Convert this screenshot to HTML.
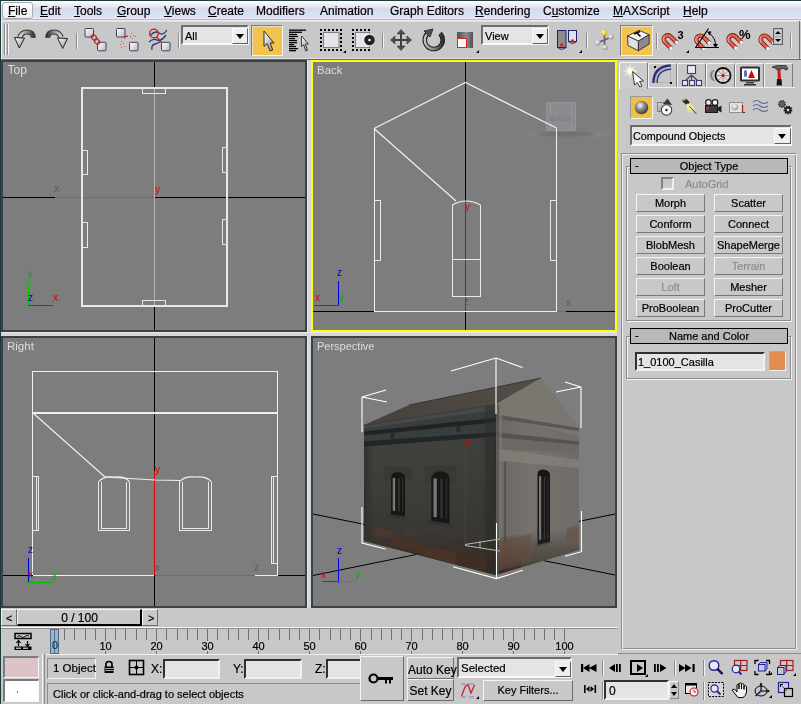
<!DOCTYPE html>
<html><head><meta charset="utf-8">
<style>
*{margin:0;padding:0;box-sizing:border-box}
html,body{width:801px;height:704px;overflow:hidden;will-change:transform;-webkit-text-stroke:0.2px currentColor;background:#c8c8c8;font-family:"Liberation Sans",sans-serif;font-size:11px;color:#000}
.a{position:absolute}
svg{position:absolute;overflow:hidden;-webkit-text-stroke:0}
#frame{left:0;top:0;width:801px;height:704px;border-left:1px solid #1e3c40;border-top:1px solid #1e3c40}
#menu{left:1px;top:1px;width:800px;height:19px;background:linear-gradient(#f6fefe 0px,#fcf8fa 1.5px,#f2f3f6 2.5px,#eaeef2 4px,#e6e9f2 6px,#d8ddee 7px,#d5dbee 8px,#dde1f3 16px,#e4e8f6 17.5px);border-bottom:1px solid #babcc8}
#menu span{position:absolute;top:3px;font-size:12px;color:#000;white-space:nowrap}
#menu u{text-decoration:underline;text-underline-offset:1px}
#filebox{left:1px;top:1px;width:31px;height:17px;border:1px solid #a8aab4;border-radius:3px;background:linear-gradient(#fdfdfd,#eceef4)}
#tb{left:1px;top:20px;width:800px;height:40px;background:linear-gradient(#ececec 0,#ececec 1px,#dedede 1px,#dedede 2px,#c8c8c8 2px)}
.vp{position:absolute;background:#7d7d7d;border:2px solid #38404a}
.vp.act{border-color:#ffff00}
.sep{position:absolute;width:2px;border-left:1px solid #8a8a8a;border-right:1px solid #f4f4f4}

.tab{border-left:1px solid #f4f4f4;border-top:1px solid #f4f4f4;border-right:1px solid #7c7c7c;border-top-left-radius:2px;border-top-right-radius:2px}
.tab.sel{background:#cccccc}
.dd{background:#e4e4e4;border:2px solid;border-color:#6c6c6c #f8f8f8 #f8f8f8 #6c6c6c}
.dd span,.inp span{position:absolute;white-space:nowrap}
.ddb{position:absolute;background:#eeeeee;border:1px solid;border-color:#fafafa #606060 #606060 #fafafa}
.ddb:after{content:"";position:absolute;left:3px;top:5px;border-left:4px solid transparent;border-right:4px solid transparent;border-top:5px solid #000}
.etch{border:1px solid #8c8c8c;box-shadow:inset 1px 1px 0 #f4f4f4,1px 1px 0 #f4f4f4}
.rtitle{background:#b9b9b9;border:1px solid #000}
.rtitle .dash{position:absolute;left:4px;top:0px;font-size:11px}
.rtitle .rt{position:absolute;left:0;right:0;top:1px;text-align:center;font-size:11px}
.chk{border:2px solid;border-color:#848484 #f0f0f0 #f0f0f0 #848484;background:#c8c8c8}
.dis{color:#8c8c8c;white-space:nowrap}
.btn{width:69px;height:18px;background:#c8c8c8;border:1px solid;border-color:#f4f4f4 #787878 #787878 #f4f4f4;text-align:center;font-size:11px;line-height:17px;white-space:nowrap}
.inp{background:#e4e4e4;border:2px solid;border-color:#303030 #f0f0f0 #f0f0f0 #303030}

.rb{border:1px solid;border-color:#f4f4f4 #6c6c6c #6c6c6c #f4f4f4;background:#c8c8c8}
.arr{position:absolute;font-size:11px}
.tl{font-size:11px;text-align:center;background:#c8c8c8;overflow:visible;white-space:nowrap}
.sk{border:1px solid;border-color:#8c8c8c #f4f4f4 #f4f4f4 #8c8c8c}
.sk span{position:absolute;white-space:nowrap;font-size:12px}
.lab{font-size:12px}
.bt{text-align:center;font-size:12px;line-height:19px;white-space:nowrap}

.obtn{background:#f2c44e;border:1px solid;border-color:#7c7c7c #f4f4f4 #f4f4f4 #7c7c7c;box-shadow:inset 1px 1px 0 #e8e0c8}
</style></head><body>
<div id="frame" class="a"></div>
<div id="menu" class="a">
  <div id="filebox" class="a"></div>
  <span style="left:7px"><u>F</u>ile</span>
  <span style="left:39px"><u>E</u>dit</span>
  <span style="left:73px"><u>T</u>ools</span>
  <span style="left:116px"><u>G</u>roup</span>
  <span style="left:163px"><u>V</u>iews</span>
  <span style="left:207px"><u>C</u>reate</span>
  <span style="left:255px">Modifiers</span>
  <span style="left:319px">Animation</span>
  <span style="left:389px">Graph Editors</span>
  <span style="left:474px"><u>R</u>endering</span>
  <span style="left:542px">C<u>u</u>stomize</span>
  <span style="left:612px"><u>M</u>AXScript</span>
  <span style="left:682px"><u>H</u>elp</span>
</div>
<div id="tb" class="a"></div>

<!-- TOOLBAR ICONS -->
<div class="a" style="left:1px;top:58px;width:800px;height:1px;background:#dcdcdc"></div>
<div class="a" style="left:1px;top:59px;width:800px;height:1px;background:#6c6c6c"></div>
<div class="a" style="left:1px;top:20px;width:1px;height:39px;background:#eef2f6"></div>
<div class="a" style="left:4px;top:24px;width:1px;height:31px;background:#8c8c8c"></div>
<div class="a" style="left:5px;top:24px;width:1px;height:31px;background:#f4f4f4"></div>
<div class="a" style="left:7px;top:24px;width:1px;height:31px;background:#8c8c8c"></div>
<div class="a" style="left:8px;top:24px;width:1px;height:31px;background:#f4f4f4"></div>
<div class="a sep" style="left:76px;top:33px;height:16px"></div>
<div class="a sep" style="left:178px;top:33px;height:16px"></div>
<div class="a sep" style="left:382px;top:33px;height:16px"></div>
<div class="a sep" style="left:586px;top:33px;height:16px"></div>
<div class="a sep" style="left:656px;top:33px;height:16px"></div>
<div class="a sep" style="left:790px;top:33px;height:16px"></div>
<div class="a" style="left:799px;top:21px;width:1px;height:38px;background:#6c6c6c"></div>
<div class="a dd" style="left:181px;top:25px;width:68px;height:20px"><span style="left:2px;top:3px;font-size:11px">All</span><div class="ddb" style="left:49px;top:1px;width:16px;height:16px"></div></div>
<div class="a dd" style="left:481px;top:25px;width:68px;height:20px"><span style="left:2px;top:3px;font-size:11px">View</span><div class="ddb" style="left:49px;top:1px;width:16px;height:16px"></div></div>
<div class="a obtn" style="left:251px;top:25px;width:32px;height:31px"></div>
<div class="a obtn" style="left:620px;top:25px;width:33px;height:31px"></div>
<svg style="left:10px;top:22px" width="790" height="36" viewBox="10 22 790 36">
 <defs>
  <linearGradient id="ug" x1="0" y1="0" x2="1" y2="0"><stop offset="0" stop-color="#c0c0c0"/><stop offset=".5" stop-color="#888"/><stop offset="1" stop-color="#303030"/></linearGradient>
  <linearGradient id="rg" x1="1" y1="0" x2="0" y2="0"><stop offset="0" stop-color="#c0c0c0"/><stop offset=".5" stop-color="#888"/><stop offset="1" stop-color="#303030"/></linearGradient>
  <linearGradient id="rg2" x1="0" y1="0" x2="1" y2="0"><stop offset="0" stop-color="#d8d8d8"/><stop offset=".55" stop-color="#909090"/><stop offset="1" stop-color="#383838"/></linearGradient><linearGradient id="ug2" x1="1" y1="0" x2="0" y2="0"><stop offset="0" stop-color="#d8d8d8"/><stop offset=".55" stop-color="#909090"/><stop offset="1" stop-color="#383838"/></linearGradient>
  <linearGradient id="ah" x1="0" y1="0" x2="1" y2="1"><stop offset="0" stop-color="#ffffff"/><stop offset="1" stop-color="#909090"/></linearGradient>
  <linearGradient id="sq" x1="0" y1="0" x2="1" y2="1"><stop offset="0" stop-color="#ffffff"/><stop offset="1" stop-color="#b8b8d0"/></linearGradient>
  <linearGradient id="mg" x1="0" y1="0" x2="1" y2="1"><stop offset="0" stop-color="#f05040"/><stop offset="1" stop-color="#f0a090"/></linearGradient>
  <linearGradient id="scg" x1="0" y1="0" x2="1" y2="0"><stop offset="0" stop-color="#505050"/><stop offset=".6" stop-color="#8a8a8a"/><stop offset="1" stop-color="#505050"/></linearGradient>
  <radialGradient id="ball" cx=".35" cy=".35" r=".7"><stop offset="0" stop-color="#ffffff"/><stop offset="1" stop-color="#909090"/></radialGradient>
  <radialGradient id="yball" cx=".35" cy=".35" r=".7"><stop offset="0" stop-color="#ffffa0"/><stop offset="1" stop-color="#c0b020"/></radialGradient>
 </defs>
 <!-- undo -->
 <path d="M33.3 37.8 Q33.3 32 27 32 Q21.8 32 19.8 37.5" fill="none" stroke="#3a3a3a" stroke-width="5.2"/>
 <path d="M33.3 37.8 Q33.3 32 27 32 Q21.8 32 19.8 37.5" fill="none" stroke="url(#rg2)" stroke-width="3.2"/>
 <path d="M14.5 37.5 L24.5 38 L19.3 48 Z" fill="url(#ah)" stroke="#202020" stroke-width="1"/>
 <!-- redo -->
 <path d="M47.7 37.8 Q47.7 32 54 32 Q59.2 32 61.2 37.5" fill="none" stroke="#3a3a3a" stroke-width="5.2"/>
 <path d="M47.7 37.8 Q47.7 32 54 32 Q59.2 32 61.2 37.5" fill="none" stroke="url(#ug2)" stroke-width="3.2"/>
 <path d="M57.5 38 L67.5 38.5 L62.7 48.5 Z" fill="url(#ah)" stroke="#202020" stroke-width="1"/>
 <!-- link -->
 <rect x="85" y="28.5" width="8.5" height="8.5" rx="1" fill="url(#sq)" stroke="#404050" stroke-width="1"/>
 <rect x="97.5" y="42.3" width="8.5" height="8.5" rx="1" fill="url(#sq)" stroke="#404050" stroke-width="1"/>
 <ellipse cx="94" cy="37.5" rx="2.2" ry="3" transform="rotate(-40 94 37.5)" fill="none" stroke="#c02020" stroke-width="1.2"/>
 <ellipse cx="97" cy="41.5" rx="2.2" ry="3" transform="rotate(-40 97 41.5)" fill="none" stroke="#c02020" stroke-width="1.2"/>
 <!-- unlink -->
 <rect x="116.5" y="28.5" width="8.5" height="8.5" rx="1" fill="url(#sq)" stroke="#404050" stroke-width="1"/>
 <rect x="129.5" y="42.3" width="8.5" height="8.5" rx="1" fill="url(#sq)" stroke="#404050" stroke-width="1"/>
 <path d="M124.5 38.5 Q125 35.5 128 36.5" fill="none" stroke="#c02020" stroke-width="1.3"/>
 <g fill="#c04040" opacity=".8"><rect x="131" y="33" width="1" height="1"/><rect x="133" y="35" width="1" height="1"/><rect x="130" y="36" width="1" height="1"/><rect x="135" y="36" width="1" height="1"/><rect x="132" y="38" width="1" height="1"/>
 <rect x="121" y="41" width="1" height="1"/><rect x="123" y="43" width="1" height="1"/><rect x="120" y="44" width="1" height="1"/><rect x="124" y="46" width="1" height="1"/><rect x="121" y="47" width="1" height="1"/></g>
 <!-- bind spacewarp -->
 <path d="M150 36 Q155 30 159 33 T167 30" fill="none" stroke="#283878" stroke-width="1.3"/>
 <path d="M149 42 Q153 38 157 40 T166 35" fill="none" stroke="#283878" stroke-width="1.3"/>
 <path d="M152 50 Q151 45 155 44 T161 41" fill="none" stroke="#283878" stroke-width="1.3"/>
 <circle cx="154" cy="33.5" r="4.3" fill="none" stroke="#c02020" stroke-width="1.3"/>
 <path d="M156.5 37 L162 43" stroke="#c02020" stroke-width="1.3"/>
 <rect x="161.5" y="42.3" width="8.5" height="8.5" rx="1" fill="url(#sq)" stroke="#404050" stroke-width="1"/>
 <!-- select arrow -->
 <path d="M264 31 L264 46.3 L267.2 43.5 L270 51 L272.7 50 L270.2 43 L274 43 Z" fill="url(#ah)" stroke="#303030" stroke-width="1"/>
 <!-- select by name -->
 <g fill="#000">
  <rect x="289" y="29.5" width="17" height="1.3"/><rect x="289" y="31.6" width="13" height="1.3"/><rect x="289" y="33.8" width="8" height="1.3"/><rect x="289" y="35.8" width="9" height="1.3"/><rect x="289" y="37.9" width="6" height="1.3"/><rect x="289" y="39.9" width="8" height="1.3"/><rect x="289" y="42" width="8" height="1.3"/><rect x="289" y="44" width="5" height="1.3"/><rect x="289" y="45.9" width="7" height="1.3"/><rect x="289" y="48" width="9" height="1.3"/><rect x="289" y="50" width="7" height="1.3"/>
 </g>
 <path d="M301.5 36 L301.5 46.5 L303.7 44.5 L305.6 51 L307.4 50.3 L305.5 44 L308.4 44 Z" fill="url(#ah)" stroke="#303030" stroke-width=".9"/>
 <!-- rect select -->
 <rect x="323.5" y="32.5" width="15.5" height="15" fill="#e4e4ec" stroke="#808080"/>
 <g fill="#000">
  <rect x="320" y="29" width="2" height="2"/><rect x="324" y="29" width="2" height="2"/><rect x="328" y="29" width="2" height="2"/><rect x="332" y="29" width="2" height="2"/><rect x="336" y="29" width="2" height="2"/><rect x="340" y="29" width="2" height="2"/>
  <rect x="320" y="49" width="2" height="2"/><rect x="324" y="49" width="2" height="2"/><rect x="328" y="49" width="2" height="2"/><rect x="332" y="49" width="2" height="2"/><rect x="336" y="49" width="2" height="2"/><rect x="340" y="49" width="2" height="2"/>
  <rect x="320" y="33" width="2" height="2"/><rect x="320" y="37" width="2" height="2"/><rect x="320" y="41" width="2" height="2"/><rect x="320" y="45" width="2" height="2"/>
  <rect x="340" y="33" width="2" height="2"/><rect x="340" y="37" width="2" height="2"/><rect x="340" y="41" width="2" height="2"/><rect x="340" y="45" width="2" height="2"/>
  <path d="M343 53 H346 V50 Z"/>
 </g>
 <!-- window/crossing -->
 <rect x="355.5" y="32.5" width="14" height="15" fill="#e4e4ec" stroke="#808080"/>
 <g fill="#000">
  <rect x="352" y="29" width="2" height="2"/><rect x="356" y="29" width="2" height="2"/><rect x="360" y="29" width="2" height="2"/><rect x="364" y="29" width="2" height="2"/><rect x="368" y="29" width="2" height="2"/>
  <rect x="352" y="49" width="2" height="2"/><rect x="356" y="49" width="2" height="2"/><rect x="360" y="49" width="2" height="2"/><rect x="364" y="49" width="2" height="2"/><rect x="368" y="49" width="2" height="2"/>
  <rect x="352" y="33" width="2" height="2"/><rect x="352" y="37" width="2" height="2"/><rect x="352" y="41" width="2" height="2"/><rect x="352" y="45" width="2" height="2"/>
 </g>
 <circle cx="369" cy="40" r="6.2" fill="#f0f0f0"/>
 <circle cx="369.5" cy="40" r="5.3" fill="#202020"/>
 <circle cx="369.5" cy="40" r="1.3" fill="#fff"/>
 <!-- move -->
 <g fill="#505050" stroke="#303030" stroke-width=".6">
  <path d="M401 29.5 L405 34 H397 Z"/><path d="M401 50.5 L405 46 H397 Z"/><path d="M390.5 40 L395 36 V44 Z"/><path d="M411.5 40 L407 36 V44 Z"/>
 </g>
 <path d="M401 33 V47 M394 40 H408" stroke="#404040" stroke-width="2"/>
 <!-- rotate -->
 <path d="M440 33.5 A9 9 0 1 1 427.5 33.5" fill="none" stroke="#202020" stroke-width="4.6"/>
 <path d="M440 33.5 A9 9 0 1 1 427.5 33.5" fill="none" stroke="url(#ug)" stroke-width="2.4"/>
 <path d="M424 31 L433 29 L430 37 Z" fill="#505050" stroke="#202020" stroke-width=".8"/>
 <!-- scale -->
 <rect x="457" y="32" width="16" height="16" fill="url(#scg)"/>
 <rect x="457.5" y="38.5" width="9" height="9" fill="#fff" stroke="#e02020"/>
 <path d="M476 53 H479 V50 Z" fill="#000"/>
 <!-- pivot -->
 <rect x="557.5" y="30.5" width="8.5" height="17" rx="0" fill="#8c8c8c" stroke="#20206a"/>
 <path d="M557.5 47.5 Q561.7 51 566 47.5" fill="none" stroke="#20206a"/>
 <circle cx="561.7" cy="45" r="1.7" fill="#e02020"/>
 <rect x="568.5" y="30.5" width="8" height="11" fill="#e0e0e8" stroke="#20206a"/>
 <path d="M568.5 41.5 Q572.5 45 576.5 41.5" fill="none" stroke="#20206a"/>
 <circle cx="572.5" cy="41" r="1.7" fill="#e02020"/>
 <path d="M579 53 H582 V50 Z" fill="#000"/>
 <!-- manipulate -->
 <path d="M604.5 33 V47 M598 42.5 L604.5 40 L611 37" stroke="#606060" stroke-width="1.6"/>
 <circle cx="604.2" cy="32.8" r="3" fill="url(#yball)"/>
 <circle cx="611" cy="37" r="2.6" fill="url(#ball)"/>
 <circle cx="597.8" cy="42.8" r="2.6" fill="url(#ball)"/>
 <circle cx="605" cy="47.4" r="2.6" fill="url(#ball)"/>
 <!-- keyboard toggle -->
 <path d="M627.5 36 L639 30.3 L649.2 34.7 L638.4 41.1 Z" fill="#f4f4f4" stroke="#303030" stroke-width=".9"/>
 <path d="M627.5 36 L638.4 41.1 V50.7 L628 45.5 Z" fill="#e0e0e0" stroke="#303030" stroke-width=".9"/>
 <path d="M638.4 41.1 L649.2 34.7 V44 L638.4 50.7 Z" fill="#8a8a8a" stroke="#303030" stroke-width=".9"/>
 <path d="M634 34 L640 31.5 M637 33 L640.5 36.5" stroke="#000" stroke-width="1.6"/>
 <!-- snaps -->
 <g transform="translate(667.8 39.3) rotate(-45)">
  <path d="M-4 9 V0 A4 4 0 0 1 4 0 V9" fill="none" stroke="#6a2018" stroke-width="4.4"/>
  <path d="M-4 9 V0 A4 4 0 0 1 4 0 V9" fill="none" stroke="#f06050" stroke-width="2.6"/>
  <path d="M-4.6 0 A4.6 4.6 0 0 1 0 -4.6" fill="none" stroke="#f8a090" stroke-width="1"/>
  <path d="M-4 7.2 V9.6 M4 7.2 V9.6" stroke="#ffffff" stroke-width="3"/>
 </g>
 <text x="677.5" y="38.5" font-family="Liberation Sans" font-weight="bold" font-size="11" fill="#000">3</text>
 <path d="M686 53 H689 V50 Z" fill="#000"/>
 <g transform="translate(700.3 39.6) rotate(-45)">
  <path d="M-4 9 V0 A4 4 0 0 1 4 0 V9" fill="none" stroke="#6a2018" stroke-width="4.4"/>
  <path d="M-4 9 V0 A4 4 0 0 1 4 0 V9" fill="none" stroke="#f06050" stroke-width="2.6"/>
  <path d="M-4.6 0 A4.6 4.6 0 0 1 0 -4.6" fill="none" stroke="#f8a090" stroke-width="1"/>
  <path d="M-4 7.2 V9.6 M4 7.2 V9.6" stroke="#ffffff" stroke-width="3"/>
 </g>
 <path d="M695 47.5 H719 M696 47 L708.5 28.5" stroke="#000" stroke-width="1.2" fill="none"/>
 <path d="M709 33 Q716 38 715.5 46" fill="none" stroke="#000" stroke-width="1"/>
 <path d="M707 31.5 L711.5 31.5 L709.5 35.5 Z M713 44 L718 44 L715.5 48 Z" fill="#000"/>
 <g transform="translate(732.6 39.2) rotate(-45)">
  <path d="M-4 9 V0 A4 4 0 0 1 4 0 V9" fill="none" stroke="#6a2018" stroke-width="4.4"/>
  <path d="M-4 9 V0 A4 4 0 0 1 4 0 V9" fill="none" stroke="#f06050" stroke-width="2.6"/>
  <path d="M-4.6 0 A4.6 4.6 0 0 1 0 -4.6" fill="none" stroke="#f8a090" stroke-width="1"/>
  <path d="M-4 7.2 V9.6 M4 7.2 V9.6" stroke="#ffffff" stroke-width="3"/>
 </g>
 <text x="739" y="38.6" font-family="Liberation Sans" font-weight="bold" font-size="13" fill="#000">%</text>
 <g transform="translate(764.6 39.6) rotate(-45)">
  <path d="M-4 9 V0 A4 4 0 0 1 4 0 V9" fill="none" stroke="#6a2018" stroke-width="4.4"/>
  <path d="M-4 9 V0 A4 4 0 0 1 4 0 V9" fill="none" stroke="#f06050" stroke-width="2.6"/>
  <path d="M-4.6 0 A4.6 4.6 0 0 1 0 -4.6" fill="none" stroke="#f8a090" stroke-width="1"/>
  <path d="M-4 7.2 V9.6 M4 7.2 V9.6" stroke="#ffffff" stroke-width="3"/>
 </g>
 <rect x="773.5" y="28.5" width="9" height="16" fill="#b0b0b0" stroke="#606060"/>
 <rect x="774.5" y="29.5" width="7" height="6" fill="#d0d0d0"/>
 <rect x="774.5" y="37.5" width="7" height="6" fill="#d0d0d0"/>
 <path d="M775 34 L778 31 L781 34 Z M775 39 L778 42 L781 39 Z" fill="#000"/>
</svg>


<div class="a" style="left:307px;top:60px;width:4px;height:548px;background:#d6d6d6;border-left:1px solid #e8e8e8"></div>
<div class="a" style="left:1px;top:332px;width:616px;height:4px;background:#d6d6d6;border-top:1px solid #e8e8e8"></div>
<!-- TOP VIEWPORT -->
<div class="vp" style="left:1px;top:60px;width:306px;height:272px"></div>
<svg style="left:3px;top:62px" width="302" height="268" viewBox="3 62 302 268">
 <g shape-rendering="crispEdges" stroke-width="1" fill="none">
  <line x1="3" y1="197.5" x2="55" y2="197.5" stroke="#000"/>
  <line x1="55" y1="197.5" x2="155" y2="197.5" stroke="#6c6c6c"/>
  <line x1="155" y1="197.5" x2="305" y2="197.5" stroke="#000"/>
  <line x1="154.5" y1="62" x2="154.5" y2="89" stroke="#000"/>
  <line x1="154.5" y1="305" x2="154.5" y2="330" stroke="#000"/>
  <line x1="154.5" y1="89" x2="154.5" y2="305" stroke="#b4b4b4"/>
  <rect x="82" y="88" width="145" height="218" stroke="#e8e8e8" stroke-width="2"/>
  <path d="M142.5 89 V93.5 H165.5 V89 M142.5 305 V300.5 H165.5 V305" stroke="#e8e8e8"/>
  <path d="M83 150.5 H87.5 V174.5 H83 M83 222.5 H87.5 V247.5 H83" stroke="#e8e8e8"/>
  <path d="M227 147.5 H222.5 V172.5 H227 M227 219.5 H222.5 V244.5 H227" stroke="#e8e8e8"/>
  <line x1="28.5" y1="281" x2="28.5" y2="306" stroke="#00c000"/>
  <line x1="28" y1="305.5" x2="53" y2="305.5" stroke="#e00000"/>
 </g>
 <g font-family="Liberation Sans" font-size="10">
  <text x="54" y="192" fill="#5c5c5c">x</text>
  <text x="155" y="193" fill="#e00000">y</text>
  <text x="28" y="277" fill="#00b000">y</text>
  <text x="28" y="301" fill="#0000d0">z</text>
  <text x="53" y="301" fill="#e00000">x</text>
 </g>
 <text x="7.5" y="74" font-family="Liberation Sans" font-size="12" fill="#dcdcdc">Top</text>
</svg>

<!-- BACK VIEWPORT -->
<div class="vp act" style="left:311px;top:60px;width:306px;height:272px"></div>
<svg style="left:313px;top:62px" width="302" height="268" viewBox="313 62 302 268">
 <defs><radialGradient id="vcs"><stop offset="0" stop-color="#5a5a5a" stop-opacity=".7"/><stop offset="1" stop-color="#7d7d7d" stop-opacity="0"/></radialGradient></defs>
 <filter id="vsb"><feGaussianBlur stdDeviation="1.5"/></filter><g filter="url(#vsb)"><ellipse cx="569" cy="134" rx="44" ry="4" fill="#858585" opacity=".7"/>
 <ellipse cx="566" cy="134" rx="28" ry="3" fill="#6a6a6a" opacity=".7"/></g>
 <rect x="546.5" y="102.5" width="29" height="28" fill="#8a8c90" stroke="#929498"/>
 <path d="M550.5 103 V130 M571.5 103 V130" stroke="#95979b" stroke-width="1"/>
 <text x="561" y="121" font-family="Liberation Sans" font-size="8" font-weight="bold" fill="#7c7e82" text-anchor="middle">BACK</text>
 <g shape-rendering="crispEdges" fill="none">
  <line x1="313" y1="311.5" x2="374" y2="311.5" stroke="#000"/>
  <line x1="557" y1="311.5" x2="566" y2="311.5" stroke="#6c6c6c"/>
  <line x1="566" y1="311.5" x2="615" y2="311.5" stroke="#000"/>
  <line x1="465.5" y1="62" x2="465.5" y2="202" stroke="#000"/>
  <line x1="465.5" y1="311" x2="465.5" y2="330" stroke="#000"/>
  <line x1="465.5" y1="202" x2="465.5" y2="311" stroke="#e00000"/>
  <path d="M374.5 128 V311.5 H556.5 V128" stroke="#f0f0f0"/>
  <path d="M375 200.5 H380.5 V260.5 H375" stroke="#e8e8e8"/>
  <path d="M556 200.5 H550.5 V260.5 H556" stroke="#e8e8e8"/>
  <path d="M452.5 205 V296.5 H480.5 V205 M453 259.5 H480" stroke="#e8e8e8"/>
  <line x1="338.5" y1="281" x2="338.5" y2="306" stroke="#0000e0"/>
  <line x1="314" y1="305.5" x2="339" y2="305.5" stroke="#e00000"/>
 </g>
 <g fill="none" stroke="#f0f0f0" stroke-width="1.2">
  <path d="M374 128.5 L465.5 82.5 L556.5 128"/>
  <path d="M374 128.5 L456 201"/>
  <path d="M452.5 205 Q466 197 480.5 205"/>
 </g>
 <g font-family="Liberation Sans" font-size="10">
  <text x="465" y="210" fill="#e00000">y</text>
  <text x="464" y="305" fill="#5c5c5c">z</text>
  <text x="566" y="306" fill="#5c5c5c">x</text>
  <text x="337" y="276" fill="#0000d0">z</text>
  <text x="315" y="301" fill="#e00000">x</text>
  <text x="339" y="301" fill="#00b000">y</text>
 </g>
 <text x="317" y="74" font-family="Liberation Sans" font-size="11.5" fill="#dcdcdc">Back</text>
</svg>

<!-- RIGHT VIEWPORT -->
<div class="vp" style="left:1px;top:336px;width:306px;height:272px"></div>
<svg style="left:3px;top:338px" width="302" height="268" viewBox="3 338 302 268">
 <g shape-rendering="crispEdges" fill="none">
  <line x1="3" y1="575.5" x2="33" y2="575.5" stroke="#000"/>
  <line x1="278" y1="575.5" x2="305" y2="575.5" stroke="#000"/>
  <line x1="155" y1="575.5" x2="255" y2="575.5" stroke="#6c6c6c"/>
  <line x1="32.5" y1="575.5" x2="155" y2="575.5" stroke="#f0f0f0"/>
  <line x1="255" y1="575.5" x2="278" y2="575.5" stroke="#f0f0f0"/>
  <line x1="154.5" y1="338" x2="154.5" y2="471" stroke="#000"/>
  <line x1="154.5" y1="575" x2="154.5" y2="606" stroke="#000"/>
  <line x1="154.5" y1="471" x2="154.5" y2="575" stroke="#e00000"/>
  <path d="M32.5 575 V371.5 H277.5 V575.5" stroke="#f0f0f0"/>
  <line x1="33" y1="412.5" x2="277" y2="412.5" stroke="#f0f0f0" stroke-width="2"/>
  <path d="M33 476.5 H38.5 V530.5 H33 M36.5 477 V530" stroke="#e8e8e8"/>
  <path d="M277 476.5 H271.5 V563.5 H277 M273.5 477 V563" stroke="#e8e8e8"/>
  <path d="M98.5 482 V530.5 H129.5 V482 M101.5 482 V529 M126.5 482 V529 M101 528.5 H127" stroke="#e8e8e8"/>
  <path d="M179.5 482 V530.5 H211.5 V482 M182.5 482 V529 M208.5 482 V529 M182 528.5 H209" stroke="#e8e8e8"/>
  <line x1="28.5" y1="558" x2="28.5" y2="583" stroke="#0000e0"/>
  <line x1="28" y1="582.5" x2="53" y2="582.5" stroke="#00c000"/>
 </g>
 <g fill="none" stroke="#f0f0f0" stroke-width="1.2">
  <path d="M33 413 L105 477"/>
  <path d="M105 477 L155 480 L180 480.5"/>
  <path d="M98.5 482 Q103 476 114 477 Q126 476 129.5 482"/>
  <path d="M179.5 482 Q184 476 195 477 Q207 476 211.5 482"/>
 </g>
 <g font-family="Liberation Sans" font-size="10">
  <text x="155" y="473" fill="#e00000">y</text>
  <text x="155" y="571" fill="#5c5c5c">x</text>
  <text x="254" y="571" fill="#5c5c5c">z</text>
  <text x="28" y="553" fill="#0000d0">z</text>
  <text x="28" y="578" fill="#e00000">x</text>
  <text x="52" y="578" fill="#00b000">y</text>
 </g>
 <text x="7" y="350" font-family="Liberation Sans" font-size="11.5" fill="#dcdcdc">Right</text>
</svg>

<!-- PERSPECTIVE VIEWPORT -->
<div class="vp" style="left:311px;top:336px;width:306px;height:272px"></div>
<svg style="left:313px;top:338px" width="302" height="268" viewBox="313 338 302 268">
 <g stroke="#000" stroke-width="1" fill="none">
  <line x1="313" y1="514" x2="615" y2="575"/>
  <line x1="313" y1="575.5" x2="615" y2="514"/>
 </g>
 <!--HOUSE-->
<defs>
<linearGradient id="lw" x1="0" y1="0" x2="1" y2="0"><stop offset="0" stop-color="#30302d"/><stop offset=".07" stop-color="#40403c"/><stop offset=".5" stop-color="#42413d"/><stop offset=".88" stop-color="#3f3e3a"/><stop offset="1" stop-color="#33322f"/></linearGradient>
<linearGradient id="gw" x1="0" y1="0" x2="1" y2="0"><stop offset="0" stop-color="#6a6762"/><stop offset=".4" stop-color="#75716c"/><stop offset="1" stop-color="#706c67"/></linearGradient>
<linearGradient id="rf" x1="0" y1="1" x2="1" y2="0"><stop offset="0" stop-color="#44403b"/><stop offset="1" stop-color="#554f48"/></linearGradient>
<linearGradient id="brk" x1="0" y1="0" x2="0" y2="1"><stop offset="0" stop-color="#3a3530" stop-opacity="0"/><stop offset="1" stop-color="#35291f"/></linearGradient>
<filter id="hb" x="-5%" y="-5%" width="110%" height="110%"><feGaussianBlur stdDeviation=".55"/></filter>
<linearGradient id="lwv" x1="0" y1="0" x2="0" y2="1"><stop offset=".3" stop-color="#24231f" stop-opacity="0"/><stop offset="1" stop-color="#24231f" stop-opacity=".45"/></linearGradient>
</defs>
<g filter="url(#hb)">
<polygon points="364,425 496,404 496,575 364,541" fill="url(#lw)"/>
<polygon points="364,425 496,404 496,575 364,541" fill="url(#lwv)"/>
<polygon points="364.0,425.0 496.0,404.0 496.0,436.5 364.0,446.5" fill="#383c3c" />
<polygon points="364.0,431.4 496.0,417.7 496.0,422.3 364.0,435.4" fill="#202424" />
<polygon points="364.0,441.2 496.0,432.2 496.0,436.5 364.0,446.5" fill="#222626" />
<polygon points="364.0,425.0 496.0,404.0 496.0,410.0 364.0,428.5" fill="#464848" />
<polygon points="390.4,433.5 394.4,433.0 394.4,438.2 390.4,438.6" fill="#2a2d2c" />
<polygon points="456.4,425.8 460.4,425.3 460.4,431.5 456.4,431.9" fill="#2a2d2c" />
<polygon points="364.0,517.8 496.0,544.2 496.0,575.0 364.0,541.0" fill="url(#brk)" />
<polygon points="374.6,526.9 393.0,530.5 393.0,539.5 374.6,535.3" fill="#5a3a2c" opacity=".5"/>
<polygon points="390.4,535.1 423.4,542.2 423.4,553.5 390.4,545.3" fill="#503226" opacity=".6"/>
<polygon points="423.4,545.0 456.4,552.4 456.4,564.8 423.4,556.3" fill="#553426" opacity=".6"/>
<polygon points="456.4,549.3 489.4,556.5 489.4,573.3 456.4,564.8" fill="#4a3024" opacity=".55"/>
<polygon points="403.6,527.4 416.8,529.8 416.8,538.0 403.6,535.3" fill="#5a4034" opacity=".35"/>
<polygon points="384.5,466.6 411.5,466.3 411.5,481.3 384.5,480.3" fill="#363532" opacity=".6"/>
<polygon points="387.1,513.7 408.9,516.9 408.9,519.8 387.1,516.4" fill="#303030" />
<path d="M391.1 514.2 L391.1 477.7 Q391.1 472.2 398.0 471.9 Q404.9 472.3 404.9 477.9 L404.9 516.3 Z" fill="#161616"/>
<polygon points="392.7,478.0 395.2,478.1 395.2,511.0 392.7,510.6" fill="#8a8a86" opacity=".85"/>
<polygon points="398.0,478.2 399.7,478.2 399.7,511.6 398.0,511.4" fill="#3a3a3a" opacity=".85"/>
<polygon points="401.9,478.3 403.3,478.3 403.3,512.1 401.9,511.9" fill="#303030" opacity=".85"/>
<polygon points="424.7,465.5 456.1,465.2 456.1,482.1 424.7,481.0" fill="#363532" opacity=".6"/>
<polygon points="427.4,520.3 453.5,524.2 453.5,527.6 427.4,523.4" fill="#303030" />
<path d="M431.3 520.9 L431.3 479.0 Q431.3 471.7 440.4 471.3 Q449.5 471.9 449.5 479.2 L449.5 523.6 Z" fill="#161616"/>
<polygon points="433.5,478.4 436.8,478.5 436.8,517.3 433.5,516.9" fill="#8a8a86" opacity=".85"/>
<polygon points="440.4,478.6 442.6,478.7 442.6,518.1 440.4,517.8" fill="#3a3a3a" opacity=".85"/>
<polygon points="445.5,478.8 447.4,478.8 447.4,518.8 445.5,518.5" fill="#303030" opacity=".85"/>
<polygon points="485.4,405.7 496.0,404.0 496.0,575.0 485.4,572.3" fill="#2c2c2a" opacity=".5"/>
<polygon points="496,404 541,378 579,428 579,550 496,575" fill="url(#gw)"/>
<polygon points="496,404 541,378 579,428 579,436 496,414" fill="#7a7670"/>
<polygon points="496.0,414.3 579.0,428.0 579.0,431.1 496.0,418.5" fill="#5a5752" />
<polygon points="496.0,432.2 579.0,441.4 579.0,445.1 496.0,437.3" fill="#56534f" />
<polygon points="496.0,437.3 579.0,445.1 579.0,453.6 496.0,448.5" fill="#6c6863" />
<polygon points="496.0,448.5 579.0,459.7 579.0,468.3 496.0,460.4" fill="#8e8a84" opacity=".5"/>
<polygon points="496.0,412.6 501.8,414.1 501.8,564.9 496.0,566.5" fill="#86827c" opacity=".5"/>
<polygon points="504.3,461.2 506.0,461.4 506.0,545.6 504.3,545.9" fill="#4a4845" opacity=".8"/>
<polygon points="535.0,545.5 552.4,541.5 552.4,543.5 535.0,547.7" fill="#5a5753" opacity=".7"/>
<path d="M537.5 544.9 L537.5 474.6 Q537.5 469.6 543.7 469.6 Q550.0 470.5 550.0 475.4 L550.0 542.1 Z" fill="#161616"/>
<polygon points="539.0,476.1 541.2,476.2 541.2,539.7 539.0,540.2" fill="#8a8a86" opacity=".85"/>
<polygon points="543.7,476.4 545.2,476.4 545.2,538.9 543.7,539.2" fill="#3a3a3a" opacity=".85"/>
<polygon points="547.2,476.5 548.5,476.6 548.5,538.2 547.2,538.5" fill="#303030" opacity=".85"/>
<polygon points="496.0,537.4 579.0,528.0 579.0,550.0 496.0,575.0" fill="url(#brk)" />
<polygon points="496.0,540.8 530.9,534.4 530.9,561.5 496.0,571.6" fill="#6a4a3c" opacity=".55"/>
<polygon points="566.5,527.9 579.0,525.6 579.0,537.8 566.5,540.8" fill="#6a4a3c" opacity=".5"/>
<polygon points="520.9,556.6 558.2,546.9 558.2,556.2 520.9,567.5" fill="#505a48" opacity=".4"/>
<polygon points="496.0,404.0 499.3,405.0 499.3,574.0 496.0,575.0" fill="#4a4744" opacity=".6"/>
</g>
<polygon points="364,425 409,405 541,378 496,404" fill="url(#rf)"/>
<path d="M364 425.5 L496 404.5" stroke="#3c3a36" stroke-width="1"/>
<path d="M409 405 L541 378" stroke="#2e2c28" stroke-width=".8"/>

<!--/HOUSE-->
 <g fill="none" stroke="#fff" stroke-width="1.1">
  <path d="M386 390 L362 397 L387 402 M362 397 V432"/>
  <path d="M451 371 L496 358 L522.5 367.5 M496 358 V414"/>
  <path d="M565 382 L581 387 L556 392 M581 387 V428"/>
  <path d="M362 507 V543 L385.5 549"/>
  <path d="M453 566.8 L496.5 578.6 L522.8 570.3 M496.5 578.6 V523"/>
  <path d="M581.5 511 V551.7 L565 556.3"/>
 </g>
 <g shape-rendering="crispEdges" fill="none">
  <line x1="465.5" y1="443" x2="465.5" y2="545" stroke="#e00000"/>
  <path d="M465 544.5 L500 539 M465 545.5 L500 551 M480 541.5 L480 548" stroke="#b8b8b8" stroke-width="1" shape-rendering="auto"/>
  <line x1="338.5" y1="558" x2="338.5" y2="583" stroke="#0000e0"/>
  <line x1="322" y1="581.5" x2="339" y2="581.5" stroke="#e00000"/>
  <line x1="338" y1="581.5" x2="356" y2="581.5" stroke="#00c000"/>
 </g>
 <g font-family="Liberation Sans" font-size="10">
  <text x="465" y="445" fill="#e00000">y</text>
  <text x="337" y="554" fill="#0000d0">z</text>
  <text x="321" y="578" fill="#e00000">x</text>
  <text x="355" y="578" fill="#00b000">y</text>
 </g>
 <text x="317" y="350" font-family="Liberation Sans" font-size="11" fill="#dcdcdc">Perspective</text>
</svg>


<!-- COMMAND PANEL -->
<div class="a" style="left:617px;top:60px;width:184px;height:594px;background:#c8c8c8"></div>
<div class="a" style="left:619px;top:87px;width:176px;height:1px;background:#f0f0f0"></div>
<div class="a" style="left:621px;top:153px;width:176px;height:497px;border-left:1px solid #8c8c8c;border-top:1px solid #8c8c8c;border-right:1px solid #f0f0f0;border-bottom:1px solid #f0f0f0;box-shadow:inset 1px 1px 0 #f0f0f0,inset -1px -1px 0 #8c8c8c"></div>
<!-- tabs -->
<div class="a tab sel" style="left:619px;top:62px;width:29px;height:27px"></div>
<div class="a tab" style="left:648px;top:63px;width:29px;height:24px"></div>
<div class="a tab" style="left:677px;top:63px;width:29px;height:24px"></div>
<div class="a tab" style="left:706px;top:63px;width:29px;height:24px"></div>
<div class="a tab" style="left:735px;top:63px;width:29px;height:24px"></div>
<div class="a tab" style="left:764px;top:63px;width:29px;height:24px"></div>
<svg style="left:619px;top:62px" width="176" height="26" viewBox="619 62 176 26">
 <defs>
  <radialGradient id="star"><stop offset="0" stop-color="#ffffff"/><stop offset=".35" stop-color="#fff8c0"/><stop offset="1" stop-color="#c8c8c8" stop-opacity="0"/></radialGradient>
  <linearGradient id="arcg" x1="0" y1="0" x2="1" y2="1"><stop offset="0" stop-color="#c0c8e8"/><stop offset="1" stop-color="#303868"/></linearGradient>
 </defs>
 <!-- create -->
 <circle cx="630" cy="71" r="6.5" fill="url(#star)"/>
 <path d="M623 71 H637 M630 64.5 V77.5 M625.5 66.5 L634.5 75.5 M634.5 66.5 L625.5 75.5" stroke="#fffce8" stroke-width=".9" opacity=".9"/>
 <circle cx="630" cy="71" r="2.2" fill="#ffffff"/>
 <path d="M632.5 71.5 L643.5 81 L639.5 81.5 L642 86 L639.8 87 L637.3 82.5 L634.5 85 Z" fill="#fafafa" stroke="#383838" stroke-width="1"/>
 <!-- modify -->
 <rect x="654.5" y="66.5" width="16" height="16" fill="none" stroke="#a8a8a8" stroke-width=".6"/>
 <path d="M655 83 Q655 68 671 67" stroke="#2a3060" stroke-width="5.5" fill="none"/>
 <path d="M655.5 83 Q655.5 68.5 671 67.5" stroke="#a8b0e0" stroke-width="2" fill="none"/>
 <rect x="654" y="66" width="2" height="2" fill="#000"/><rect x="670" y="82" width="2" height="2" fill="#000"/>
 <!-- hierarchy -->
 <g fill="#e8e8f4" stroke="#3c3c70" stroke-width="1.1">
  <path d="M691.5 75 L685 81 M691.5 75 V81 M691.5 75 L698 81" fill="none"/>
  <rect x="687.5" y="65.5" width="8" height="8"/>
  <rect x="682.5" y="80.5" width="5" height="5"/>
  <rect x="689.5" y="80.5" width="5" height="5"/>
  <rect x="696.5" y="80.5" width="5" height="5"/>
 </g>
 <!-- motion -->
 <path d="M714 70 Q709 75 714 81" stroke="#404040" fill="none" stroke-width=".8"/>
 <path d="M712 71 Q708 75 712 80" stroke="#808080" fill="none" stroke-width=".8"/>
 <circle cx="723" cy="75.5" r="7.5" fill="#e0e0e0" stroke="#101010" stroke-width="1.8"/>
 <g stroke="#808080" stroke-width=".8"><path d="M723 69 V82 M716.5 75.5 H729.5 M718.5 71 L727.5 80 M727.5 71 L718.5 80"/></g>
 <circle cx="723" cy="75.5" r="1.6" fill="#e00000"/>
 <!-- display -->
 <rect x="740" y="66.5" width="20" height="15" rx="1.5" fill="#303030"/>
 <rect x="742" y="68.5" width="16" height="11" fill="#ffffff"/>
 <rect x="744" y="70" width="3" height="7" rx="1.5" fill="#6070d0"/>
 <path d="M748 78 L751.5 70 L755 78 Z" fill="#e00000"/>
 <rect x="746" y="82" width="8" height="1.5" fill="#404040"/><rect x="744" y="84" width="12" height="1.5" fill="#303030"/>
 <!-- utilities -->
 <path d="M772 67 L777 65.5 L786 65.5 L788 69 L786 70 L783 68.5 L781 68.5 L780.5 70 L777 70 L776 68.5 Z" fill="#606060" stroke="#202020" stroke-width=".7"/>
 <path d="M777.5 70 L780.5 70 L781 79 L782 85 L777 85 L777.7 79 Z" fill="#c02020"/>
 <path d="M777 79 L781.5 79 L782 85.5 L776.5 85.5 Z" fill="#181818"/>
</svg>
<!-- create sub icons -->
<div class="a" style="left:630px;top:96px;width:23px;height:23px;background:#f0c048;border:1px solid #989898;border-right-color:#f4f4f4;border-bottom-color:#f4f4f4"></div>
<svg style="left:628px;top:94px" width="170" height="27" viewBox="628 94 170 27">
 <defs>
  <radialGradient id="sph" cx=".4" cy=".35" r=".7"><stop offset="0" stop-color="#f8f8f8"/><stop offset=".45" stop-color="#8c8c8c"/><stop offset="1" stop-color="#303030"/></radialGradient>
  <radialGradient id="lgt"><stop offset="0" stop-color="#ffffb0"/><stop offset="1" stop-color="#c8c8c8" stop-opacity="0"/></radialGradient>
 </defs>
 <circle cx="641.5" cy="107.5" r="6.8" fill="url(#sph)"/>
 <!-- shapes -->
 <defs><linearGradient id="shg" x1="0" y1="0" x2="1" y2="1"><stop offset="0" stop-color="#d8d8d8"/><stop offset="1" stop-color="#8c8c8c"/></linearGradient>
 <radialGradient id="beam" cx=".5" cy=".5" r=".5"><stop offset="0" stop-color="#ffffa0"/><stop offset=".6" stop-color="#f0f080" stop-opacity=".6"/><stop offset="1" stop-color="#c8c8c8" stop-opacity="0"/></radialGradient></defs>
 <rect x="657.5" y="102.5" width="9" height="9" fill="url(#shg)" stroke="#808080"/>
 <path d="M663 104 L667.5 98.5 L672 105 Z" fill="#383838"/>
 <circle cx="666.5" cy="110" r="5.2" fill="#fafafa" stroke="#404040" stroke-width="1.1"/>
 <circle cx="666.5" cy="110" r="1.3" fill="#303030"/>
 <!-- lights -->
 <ellipse cx="690" cy="108" rx="5" ry="6" transform="rotate(-40 690 108)" fill="url(#beam)"/>
 <path d="M681.5 100.5 L686 98.5 L689.5 102 L687.5 106 Z" fill="#282828"/>
 <path d="M682.5 100.5 L686 99.5" stroke="#e0e0e0" stroke-width=".8"/>
 <path d="M687 104 L691 109" stroke="#fff8a0" stroke-width="2.4"/>
 <path d="M689 106 L696.5 114" stroke="#303030" stroke-width=".9"/>
 <!-- cameras -->
 <circle cx="708.5" cy="102.5" r="2.8" fill="#f4f4f4" stroke="#202020" stroke-width="1.2"/>
 <circle cx="715" cy="102.5" r="2.8" fill="#f4f4f4" stroke="#202020" stroke-width="1.2"/>
 <rect x="705.5" y="105.5" width="12" height="7" fill="#3c3c3c" stroke="#181818"/>
 <path d="M718 107.5 L721.5 105.5 V112.5 L718 110.5 Z" fill="#202020"/>
 <rect x="706.5" y="107" width="2.5" height="2.5" fill="#e02020"/>
 <!-- helpers -->
 <rect x="729.5" y="102.5" width="13" height="10" fill="#e4e4e4" stroke="#909090"/>
 <circle cx="735" cy="107" r="3.3" fill="url(#sph2)"/>
 <defs><radialGradient id="sph2" cx=".4" cy=".35" r=".7"><stop offset="0" stop-color="#ffffff"/><stop offset="1" stop-color="#909090"/></radialGradient></defs>
 <path d="M742.5 105 V112.5" stroke="#c02020" stroke-width="1.4"/><path d="M743 112.5 H745" stroke="#303030" stroke-width="1"/>
 <!-- spacewarps -->
 <g stroke="#5c6aa0" stroke-width="1.1" fill="none">
  <path d="M753 102 Q756.5 99 760 102 T768 102"/>
  <path d="M753 106 Q756.5 103 760 106 T768 106"/>
  <path d="M753 110 Q756.5 107 760 110 T768 110"/>
 </g>
 <!-- systems -->
 <circle cx="782" cy="104" r="3.2" fill="#606060" stroke="#303030" stroke-width="1.6" stroke-dasharray="1.2 1"/>
 <circle cx="788" cy="110" r="3.4" fill="#303030" stroke="#101010" stroke-width="2" stroke-dasharray="1.3 1"/>
 <circle cx="788" cy="110" r="1.2" fill="#e0e0e0"/>
</svg>
<!-- dropdown -->
<div class="a dd" style="left:630px;top:125px;width:162px;height:21px"><span style="left:1px;top:2.5px;font-size:10.8px">Compound Objects</span><div class="ddb" style="left:142px;top:1px;width:17px;height:16px"></div></div>
<!-- rollout 1 -->
<div class="a etch" style="left:626px;top:166px;width:165px;height:155px"></div>
<div class="a rtitle" style="left:630px;top:158px;width:158px;height:16px"><span class="dash">-</span><span class="rt">Object Type</span></div>
<div class="a chk" style="left:661px;top:177px;width:13px;height:13px"></div>
<div class="a dis" style="left:685px;top:178px;font-size:11px">AutoGrid</div>
<div class="a btn" style="left:636px;top:194px">Morph</div>
<div class="a btn" style="left:714px;top:194px">Scatter</div>
<div class="a btn" style="left:636px;top:215px">Conform</div>
<div class="a btn" style="left:714px;top:215px">Connect</div>
<div class="a btn" style="left:636px;top:236px">BlobMesh</div>
<div class="a btn" style="left:714px;top:236px">ShapeMerge</div>
<div class="a btn" style="left:636px;top:257px">Boolean</div>
<div class="a btn dis" style="left:714px;top:257px">Terrain</div>
<div class="a btn dis" style="left:636px;top:278px">Loft</div>
<div class="a btn" style="left:714px;top:278px">Mesher</div>
<div class="a btn" style="left:636px;top:299px">ProBoolean</div>
<div class="a btn" style="left:714px;top:299px">ProCutter</div>
<!-- rollout 2 -->
<div class="a etch" style="left:626px;top:336px;width:165px;height:43px"></div>
<div class="a rtitle" style="left:630px;top:328px;width:158px;height:16px"><span class="dash">-</span><span class="rt">Name and Color</span></div>
<div class="a inp" style="left:635px;top:352px;width:130px;height:19px"><span style="left:1px;top:2px;font-size:11px">1_0100_Casilla</span></div>
<div class="a" style="left:769px;top:351px;width:17px;height:20px;background:#e28c50;border:1px solid #a8a8a8;border-right-color:#f0f0f0;border-bottom-color:#f0f0f0"></div>


<!-- TIME SLIDER -->
<div class="a rb" style="left:1px;top:609px;width:16px;height:17px"><span class="arr" style="left:4px;top:2px">&lt;</span></div>
<div class="a" style="left:17px;top:609px;width:125px;height:17px;border-top:1px solid #f4f4f4;border-left:1px solid #f4f4f4;border-right:2px solid #000;border-bottom:2px solid #000"></div>
<div class="a" style="left:18px;top:611px;width:123px;text-align:center;font-size:12px">0 / 100</div>
<div class="a rb" style="left:142px;top:609px;width:16px;height:17px"><span class="arr" style="left:5px;top:2px">&gt;</span></div>
<!-- TRACKBAR -->
<div class="a" style="left:1px;top:627px;width:617px;height:1px;background:#f4f4f4"></div>
<div class="a" style="left:1px;top:628px;width:617px;height:1px;background:#8c8c8c"></div>
<div class="a" style="left:46px;top:654px;width:572px;height:1px;background:#f0f0f0"></div>
<div class="a" style="left:54px;top:629px;width:1px;height:25px;background:#707070"></div>
<div class="a" style="left:64px;top:629px;width:1px;height:11px;background:#707070"></div>
<div class="a" style="left:74px;top:629px;width:1px;height:11px;background:#707070"></div>
<div class="a" style="left:85px;top:629px;width:1px;height:11px;background:#707070"></div>
<div class="a" style="left:95px;top:629px;width:1px;height:11px;background:#707070"></div>
<div class="a" style="left:105px;top:629px;width:1px;height:25px;background:#707070"></div>
<div class="a tl" style="left:99px;top:641px;width:13px;height:10px;line-height:10px">10</div>
<div class="a" style="left:115px;top:629px;width:1px;height:11px;background:#707070"></div>
<div class="a" style="left:125px;top:629px;width:1px;height:11px;background:#707070"></div>
<div class="a" style="left:136px;top:629px;width:1px;height:11px;background:#707070"></div>
<div class="a" style="left:146px;top:629px;width:1px;height:11px;background:#707070"></div>
<div class="a" style="left:156px;top:629px;width:1px;height:25px;background:#707070"></div>
<div class="a tl" style="left:150px;top:641px;width:13px;height:10px;line-height:10px">20</div>
<div class="a" style="left:166px;top:629px;width:1px;height:11px;background:#707070"></div>
<div class="a" style="left:177px;top:629px;width:1px;height:11px;background:#707070"></div>
<div class="a" style="left:187px;top:629px;width:1px;height:11px;background:#707070"></div>
<div class="a" style="left:197px;top:629px;width:1px;height:11px;background:#707070"></div>
<div class="a" style="left:207px;top:629px;width:1px;height:25px;background:#707070"></div>
<div class="a tl" style="left:201px;top:641px;width:13px;height:10px;line-height:10px">30</div>
<div class="a" style="left:217px;top:629px;width:1px;height:11px;background:#707070"></div>
<div class="a" style="left:228px;top:629px;width:1px;height:11px;background:#707070"></div>
<div class="a" style="left:238px;top:629px;width:1px;height:11px;background:#707070"></div>
<div class="a" style="left:248px;top:629px;width:1px;height:11px;background:#707070"></div>
<div class="a" style="left:258px;top:629px;width:1px;height:25px;background:#707070"></div>
<div class="a tl" style="left:252px;top:641px;width:13px;height:10px;line-height:10px">40</div>
<div class="a" style="left:268px;top:629px;width:1px;height:11px;background:#707070"></div>
<div class="a" style="left:279px;top:629px;width:1px;height:11px;background:#707070"></div>
<div class="a" style="left:289px;top:629px;width:1px;height:11px;background:#707070"></div>
<div class="a" style="left:299px;top:629px;width:1px;height:11px;background:#707070"></div>
<div class="a" style="left:309px;top:629px;width:1px;height:25px;background:#707070"></div>
<div class="a tl" style="left:303px;top:641px;width:13px;height:10px;line-height:10px">50</div>
<div class="a" style="left:319px;top:629px;width:1px;height:11px;background:#707070"></div>
<div class="a" style="left:330px;top:629px;width:1px;height:11px;background:#707070"></div>
<div class="a" style="left:340px;top:629px;width:1px;height:11px;background:#707070"></div>
<div class="a" style="left:350px;top:629px;width:1px;height:11px;background:#707070"></div>
<div class="a" style="left:360px;top:629px;width:1px;height:25px;background:#707070"></div>
<div class="a tl" style="left:354px;top:641px;width:13px;height:10px;line-height:10px">60</div>
<div class="a" style="left:371px;top:629px;width:1px;height:11px;background:#707070"></div>
<div class="a" style="left:381px;top:629px;width:1px;height:11px;background:#707070"></div>
<div class="a" style="left:391px;top:629px;width:1px;height:11px;background:#707070"></div>
<div class="a" style="left:401px;top:629px;width:1px;height:11px;background:#707070"></div>
<div class="a" style="left:411px;top:629px;width:1px;height:25px;background:#707070"></div>
<div class="a tl" style="left:405px;top:641px;width:13px;height:10px;line-height:10px">70</div>
<div class="a" style="left:422px;top:629px;width:1px;height:11px;background:#707070"></div>
<div class="a" style="left:432px;top:629px;width:1px;height:11px;background:#707070"></div>
<div class="a" style="left:442px;top:629px;width:1px;height:11px;background:#707070"></div>
<div class="a" style="left:452px;top:629px;width:1px;height:11px;background:#707070"></div>
<div class="a" style="left:462px;top:629px;width:1px;height:25px;background:#707070"></div>
<div class="a tl" style="left:456px;top:641px;width:13px;height:10px;line-height:10px">80</div>
<div class="a" style="left:473px;top:629px;width:1px;height:11px;background:#707070"></div>
<div class="a" style="left:483px;top:629px;width:1px;height:11px;background:#707070"></div>
<div class="a" style="left:493px;top:629px;width:1px;height:11px;background:#707070"></div>
<div class="a" style="left:503px;top:629px;width:1px;height:11px;background:#707070"></div>
<div class="a" style="left:513px;top:629px;width:1px;height:25px;background:#707070"></div>
<div class="a tl" style="left:507px;top:641px;width:13px;height:10px;line-height:10px">90</div>
<div class="a" style="left:524px;top:629px;width:1px;height:11px;background:#707070"></div>
<div class="a" style="left:534px;top:629px;width:1px;height:11px;background:#707070"></div>
<div class="a" style="left:544px;top:629px;width:1px;height:11px;background:#707070"></div>
<div class="a" style="left:554px;top:629px;width:1px;height:11px;background:#707070"></div>
<div class="a" style="left:564px;top:629px;width:1px;height:25px;background:#707070"></div>
<div class="a tl" style="left:555px;top:641px;width:19px;height:10px;line-height:10px">100</div>
<div class="a" style="left:50px;top:629px;width:9px;height:25px;background:#9cb4cc;border:1px solid #506880"></div>
<div class="a" style="left:54px;top:629px;width:1px;height:25px;background:#507090"></div>
<div class="a" style="left:51px;top:639px;width:8px;font-size:11px;color:#103060;text-align:center">0</div>
<svg style="left:12px;top:631px" width="22" height="20" viewBox="12 631 22 20">
 <rect x="15" y="633.5" width="16" height="5" fill="none" stroke="#000" stroke-width="1.5"/>
 <path d="M17 637 Q19 634.5 21 636.5 T25 636.5 T29 636" stroke="#000" fill="none" stroke-width=".9"/>
 <path d="M18.5 646 V641 M16.5 643 L18.5 640.5 L20.5 643 M27.5 641 V646 M25.5 644 L27.5 646.5 L29.5 644" stroke="#000" fill="none" stroke-width="1.2"/>
 <rect x="14.5" y="646.5" width="17" height="3.5" fill="#000"/><path d="M16 648.2 H21 M23 648.2 H28" stroke="#fff" stroke-width="1"/>
</svg>
<!-- STATUS -->
<div class="a" style="left:3px;top:656px;width:36px;height:22px;background:#dcc4c6;border:2px solid;border-color:#7c7c7c #f8f8f8 #f8f8f8 #7c7c7c;border-width:2px 1px 1px 2px"></div>
<div class="a" style="left:3px;top:679px;width:36px;height:23px;background:#ffffff;border:2px solid;border-color:#7c7c7c #f8f8f8 #f8f8f8 #7c7c7c;border-width:2px 1px 1px 2px"></div>
<div class="a" style="left:17px;top:691px;width:1px;height:2px;background:#5080d0"></div>
<div class="a" style="left:42px;top:654px;width:3px;height:50px;border-left:1px solid #f4f4f4;border-right:1px solid #8c8c8c"></div>
<div class="a sk" style="left:47px;top:658px;width:49px;height:21px"><span style="left:5px;top:3px;font-size:11.5px">1 Object</span></div>
<svg style="left:100px;top:656px" width="50" height="22" viewBox="100 656 50 22">
 <path d="M106 667 V664 Q106 661.5 109 661.5 Q112 661.5 112 664 V667" fill="none" stroke="#000" stroke-width="1.6"/>
 <rect x="104.5" y="666.5" width="9" height="6.5" fill="#000"/>
 <path d="M105 668.5 H113 M105 670.5 H113" stroke="#c8c8c8" stroke-width=".8"/>
 <rect x="129.5" y="660.5" width="14" height="14" fill="none" stroke="#000" stroke-width="1.6"/>
 <path d="M136.5 661 V674 M130 667.5 H143" stroke="#000" stroke-width="1"/>
 <circle cx="136.5" cy="667.5" r="2" fill="#000"/>
</svg>
<div class="a lab" style="left:151px;top:662px">X:</div>
<div class="a inp" style="left:163px;top:659px;width:57px;height:20px"></div>
<div class="a lab" style="left:233px;top:662px">Y:</div>
<div class="a inp" style="left:244px;top:659px;width:58px;height:20px"></div>
<div class="a lab" style="left:315px;top:662px">Z:</div>
<div class="a inp" style="left:326px;top:659px;width:34px;height:20px;border-right:none"></div>
<div class="a sk" style="left:47px;top:683px;width:313px;height:21px;border-right:none;border-bottom:none"><span style="left:5px;top:4px;font-size:11px">Click or click-and-drag to select objects</span></div>
<!-- KEY -->
<div class="a rb" style="left:360px;top:656px;width:44px;height:45px"></div>
<svg style="left:362px;top:665px" width="40" height="25" viewBox="362 665 40 25">
 <ellipse cx="373.5" cy="678.5" rx="4" ry="4" fill="none" stroke="#000" stroke-width="2.2"/>
 <rect x="377" y="677" width="16" height="3" fill="#000"/>
 <rect x="385" y="679" width="2" height="4.5" fill="#000"/><rect x="389" y="679" width="2" height="4.5" fill="#000"/>
</svg>
<div class="a rb bt" style="left:407px;top:657px;width:47px;height:22px;line-height:24px">Auto Key</div>
<div class="a rb bt" style="left:407px;top:679px;width:47px;height:22px;line-height:23px">Set Key</div>
<div class="a dd" style="left:457px;top:657px;width:115px;height:21px"><span style="left:2px;top:3px;font-size:11.5px">Selected</span><div class="ddb" style="left:96px;top:2px;width:16px;height:16px"></div></div>
<svg style="left:458px;top:681px" width="24" height="21" viewBox="458 681 24 21">
 <path d="M461 684 H466 M469 684 H474 M461 697 H466 M469 697 H474" stroke="#8c98d8" stroke-width="1.5"/>
 <path d="M461.5 696 L465 687 L468 684.5 L471 693 L474.5 685" fill="none" stroke="#d02020" stroke-width="1.3"/>
 <path d="M476 699 H479 V696 Z" fill="#000"/>
</svg>
<div class="a rb bt" style="left:483px;top:680px;width:90px;height:21px;font-size:11px">Key Filters...</div>
<!-- PLAYBACK -->
<div class="a" style="left:618px;top:653px;width:183px;height:1px;background:#8c8c8c"></div>
<svg style="left:576px;top:656px" width="225" height="48" viewBox="576 656 225 48">
 <g fill="#000">
  <rect x="581" y="664" width="2.2" height="8"/><path d="M583 668 L589.5 664 V672 Z M589 668 L596.5 664 V672 Z"/>
  <path d="M609 668 L615 664 V672 Z"/><rect x="616" y="664" width="1.8" height="8"/><rect x="619" y="664" width="1.8" height="8"/>
  <path d="M637 664 L643 668 L637 672 Z"/>
  <rect x="654" y="664" width="1.8" height="8"/><rect x="657" y="664" width="1.8" height="8"/><path d="M660 664 L666.5 668 L660 672 Z"/>
  <path d="M679 664 L685.5 668 L679 672 Z M685 664 L691.5 668 L685 672 Z"/><rect x="692.5" y="664" width="2.2" height="8"/>
  <path d="M645 677 H648 V674 Z"/>
  <rect x="584" y="685" width="1.6" height="8"/><path d="M586 689 L589.5 686 V692 Z M594 689 L590.5 686 V692 Z"/><rect x="594.5" y="685" width="1.6" height="8"/>
 </g>
 <rect x="631" y="661" width="14" height="13" fill="none" stroke="#000" stroke-width="2"/>
 <g stroke="#8c8c8c"><path d="M602.5 660 V676 M674.5 660 V676 M703.5 660 V676 M602.5 682 V700 M703.5 682 V700"/></g>
 <g stroke="#f4f4f4"><path d="M603.5 660 V676 M675.5 660 V676 M704.5 660 V676 M603.5 682 V700 M704.5 682 V700"/></g>
 <!-- time config -->
 <rect x="685.5" y="683.5" width="11" height="10" fill="#e8e8e8" stroke="#000"/>
 <rect x="685.5" y="683.5" width="11" height="2" fill="#000"/>
 <circle cx="694" cy="692" r="4" fill="#f0f0f0" stroke="#c02020" stroke-width="1.1"/>
 <path d="M694 689.5 V692 H696" stroke="#c02020" fill="none" stroke-width=".9"/>
</svg>
<div class="a inp" style="left:604px;top:680px;width:65px;height:20px"><span style="left:3px;top:2px;font-size:12px">0</span></div>
<div class="a" style="left:669px;top:681px;width:10px;height:18px;border:1px solid;border-color:#f4f4f4 #8c8c8c #8c8c8c #f4f4f4"></div>
<div class="a" style="left:671px;top:684px;border-left:3px solid transparent;border-right:3px solid transparent;border-bottom:4px solid #000"></div>
<div class="a" style="left:671px;top:692px;border-left:3px solid transparent;border-right:3px solid transparent;border-top:4px solid #000"></div>
<!-- NAV -->
<svg style="left:705px;top:656px" width="96" height="48" viewBox="705 656 96 48">
 <!-- zoom -->
 <circle cx="714" cy="665.5" r="4.8" fill="#e8e8f0" stroke="#2020a0" stroke-width="1.4"/>
 <path d="M717.5 669 L722.5 674" stroke="#000" stroke-width="2.4"/><path d="M718.5 670 L722 673.5" stroke="#3030c0" stroke-width="1"/>
 <!-- zoom all -->
 <g fill="none" stroke="#a02020" stroke-width="1.2"><rect x="734.5" y="660.5" width="12.5" height="10"/><path d="M740.7 660.5 V670.5 M734.5 665.5 H747"/></g>
 <circle cx="736" cy="669" r="3.8" fill="#e8e8f0" stroke="#2020a0" stroke-width="1.2"/><path d="M738.5 671.5 L741.5 674.5" stroke="#2020a0" stroke-width="1.8"/>
 <!-- zoom extents -->
 <path d="M755 664 V660.5 H758.5 M766 660.5 H769.5 V664 M755 671 V674.5 H758.5 M766 674.5 H769.5 V671" fill="none" stroke="#000" stroke-width="1.3"/>
 <path d="M758.5 664.5 L760.5 662.5 H767 V669 L765 671" fill="#b8c0e0" stroke="#2020a0"/>
 <rect x="758.5" y="664.5" width="6.5" height="6.5" fill="#c8c8e0" stroke="#2020a0"/>
 <path d="M769 675 H772 V672 Z" fill="#000"/>
 <!-- zoom extents all -->
 <g fill="none" stroke="#a02020" stroke-width="1.2"><rect x="780.5" y="660.5" width="12.5" height="10"/><path d="M786.7 660.5 V670.5 M780.5 665.5 H793"/></g>
 <path d="M777.5 667.5 L779.5 665.5 H786 V672 L784 674" fill="#c8c8c8" stroke="#2020a0"/>
 <rect x="777.5" y="667.5" width="6.5" height="7" fill="#c8c8c8" stroke="#2020a0"/>
 <path d="M793 676 H796 V673 Z" fill="#000"/>
 <!-- zoom region -->
 <rect x="708.5" y="682.5" width="15" height="14" fill="#d8d8d8" stroke="#000" stroke-dasharray="2 1.2"/>
 <circle cx="714.5" cy="688.5" r="3.6" fill="#e8e8f0" stroke="#2020a0" stroke-width="1.2"/>
 <path d="M717 691 L720.5 694.5" stroke="#2020a0" stroke-width="1.8"/>
 <!-- pan -->
 <path d="M732 690 L734.5 689 L737 692 V685 Q737.5 683.5 739 684.5 V689 V683.5 Q740.5 682.5 741.5 683.5 V689 V684 Q743 683 744 684.5 V689.5 V686 Q745.5 685 746.5 686.5 V692 Q746 696 743 697.5 H738 Z" fill="#f4f4f4" stroke="#000" stroke-width="1"/>
 <!-- orbit -->
 <ellipse cx="761" cy="691" rx="6" ry="5" fill="none" stroke="#000" stroke-width="1"/>
 <path d="M761 691 V683.5 M761 691 H769 M761 691 L755.5 696" stroke="#000" stroke-width="1.1"/>
 <path d="M759.5 685 L761 682.5 L762.5 685 Z M767.5 689.5 L770 691 L767.5 692.5 Z" fill="#000"/>
 <path d="M761 691 L756.5 695" stroke="#2020a0" stroke-width="1.2"/>
 <path d="M769 698 H772 V695 Z" fill="#000"/>
 <!-- maximize -->
 <rect x="778.5" y="682.5" width="10" height="10" fill="#d0d0e0" stroke="#2020a0" stroke-width="1.2"/>
 <rect x="784.5" y="688.5" width="8" height="8" fill="#c8c8c8" stroke="#000" stroke-width="1.2"/>
 <path d="M780.5 684.5 L787 691" stroke="#000" stroke-width=".9" stroke-dasharray="1 1"/>
 <path d="M780.5 684.5 H783 M780.5 684.5 V687" stroke="#000"/>
</svg>

</body></html>
